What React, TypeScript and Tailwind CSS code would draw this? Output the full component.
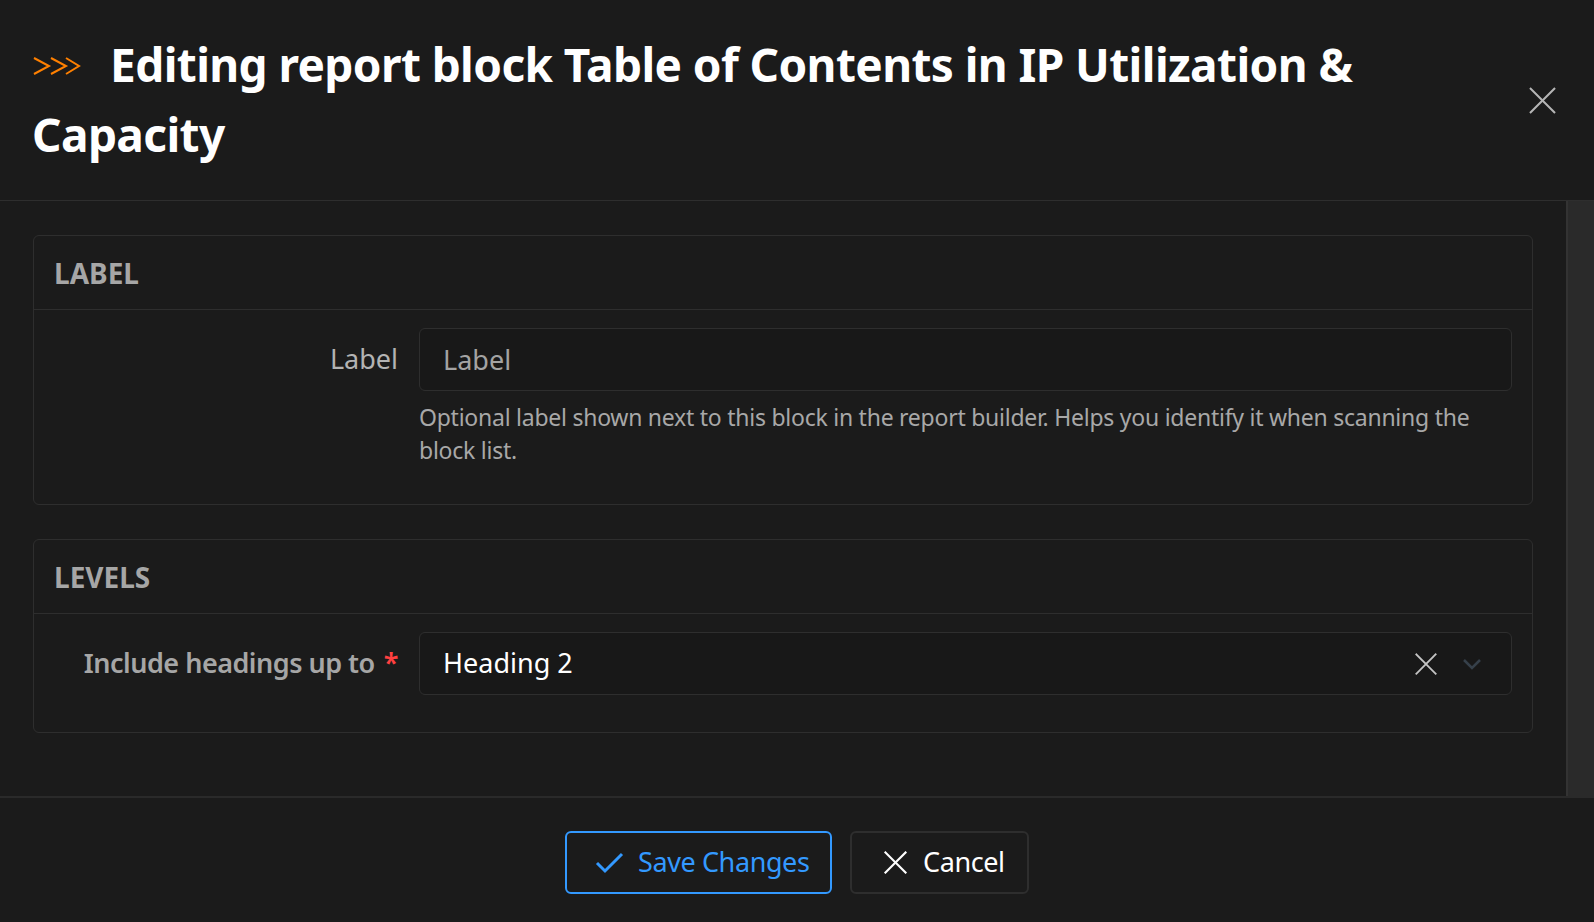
import React, { useState } from "react";

const font = "font-['Noto_Sans','Open_Sans',sans-serif]";

function Chevrons() {
  return (
    <svg width="50" height="20" viewBox="0 0 50 20" className="inline-block align-middle mr-[28px] -mt-[6px]">
      <polyline points="2,2 17,10 2,18" fill="none" stroke="#ff8000" strokeWidth="2" />
      <polyline points="19,2 34,10 19,18" fill="none" stroke="#ff8000" strokeWidth="2" />
      <polyline points="34,2 47,10 34,18" fill="none" stroke="#ff8000" strokeWidth="2" />
    </svg>
  );
}

function XIcon({ size, color, width = 2 }: { size: number; color: string; width?: number }) {
  return (
    <svg width={size} height={size} viewBox="0 0 24 24" fill="none" stroke={color} strokeWidth={width} strokeLinecap="square">
      <line x1="1.5" y1="1.5" x2="22.5" y2="22.5" />
      <line x1="22.5" y1="1.5" x2="1.5" y2="22.5" />
    </svg>
  );
}

function Panel({ title, children }: { title: string; children: React.ReactNode }) {
  return (
    <section className="rounded-[6px] border border-[#2e2e2e]">
      <div className="h-[74px] flex items-center px-[20px] border-b border-[#2e2e2e]">
        <h2 className="text-[28px] font-bold text-[#a6a6a6] uppercase">{title}</h2>
      </div>
      <div className="px-[20px] pt-[18px] pb-[37px]">{children}</div>
    </section>
  );
}

export default function App() {
  const [label, setLabel] = useState("");
  const [level, setLevel] = useState<string | null>("Heading 2");

  return (
    <div className={`h-screen flex flex-col bg-[#1b1b1b] text-white ${font}`}>
      <header className="h-[201px] shrink-0 flex items-center border-b border-[#2e2e2e] pl-[32px] pr-[38px]">
        <h1 className="flex-1 text-[46px] leading-[70px] font-bold tracking-[-0.6px] text-white -mt-[2px]">
          <Chevrons />
          Editing report block Table of Contents in IP Utilization &amp; Capacity
        </h1>
        <button className="ml-[40px] shrink-0">
          <XIcon size={27} color="#b5b5b5" width={1.8} />
        </button>
      </header>

      <div className="flex flex-1 min-h-0">
        <main className="flex-1 overflow-hidden pl-[33px] pr-[33px] pt-[34px] flex flex-col gap-[34px]">
          <Panel title="Label">
            <div className="grid grid-cols-[344px_1fr] gap-x-[21px]">
              <div className="h-[63px] flex items-center justify-end text-[27px] text-[#b3b3b3]">Label</div>
              <div>
                <input
                  className="w-full h-[63px] rounded-[6px] border border-[#2e2e2e] bg-[#181818] px-[23px] text-[27px] text-white placeholder:text-[#a3a3a3] outline-none"
                  placeholder="Label"
                  value={label}
                  onChange={(e) => setLabel(e.target.value)}
                />
                <p className="mt-[10px] text-[23px] leading-[33px] tracking-[-0.25px] text-[#a8a8a8]">
                  Optional label shown next to this block in the report builder. Helps you identify it when scanning the
                  block list.
                </p>
              </div>
            </div>
          </Panel>

          <Panel title="Levels">
            <div className="grid grid-cols-[344px_1fr] gap-x-[21px]">
              <div className="h-[63px] flex items-center justify-end text-[27px] font-semibold tracking-[-0.5px] text-[#a6a6a6]">
                Include headings up to<span className="ml-[9px] text-[#ff4040]">*</span>
              </div>
              <div className="h-[63px] rounded-[6px] border border-[#2e2e2e] bg-[#181818] pl-[23px] pr-[29px] flex items-center">
                <span className="flex-1 text-[27px] text-white">{level ?? ""}</span>
                <button onClick={() => setLevel(null)} className="mr-[25px]">
                  <XIcon size={22} color="#c4c4c4" width={2} />
                </button>
                <svg width="20" height="12" viewBox="0 0 20 12" fill="none" stroke="#36404a" strokeWidth="2.5">
                  <polyline points="2,2 10,10 18,2" />
                </svg>
              </div>
            </div>
          </Panel>
        </main>
        <div className="w-[28px] shrink-0 bg-[#2a2a2a] border-l-2 border-[#333333]" />
      </div>

      <footer className="h-[126px] shrink-0 border-t-2 border-[#2a2a2a] flex items-center justify-center gap-[18px] pt-[5px]">
        <button className="h-[63px] w-[267px] rounded-[6px] border-2 border-[#3399ff] flex items-center pl-[28px] gap-[14px] text-[27px] tracking-[-0.4px] text-[#3399ff]">
          <svg width="29" height="22" viewBox="0 0 29 22" fill="none" stroke="#3399ff" strokeWidth="3">
            <polyline points="2,11 10,19 27,2" />
          </svg>
          Save Changes
        </button>
        <button className="h-[63px] w-[179px] rounded-[6px] border-2 border-[#2e2e2e] flex items-center pl-[32px] gap-[16px] text-[27px] tracking-[-0.4px] text-white">
          <XIcon size={23} color="#ffffff" width={2.2} />
          Cancel
        </button>
      </footer>
    </div>
  );
}
